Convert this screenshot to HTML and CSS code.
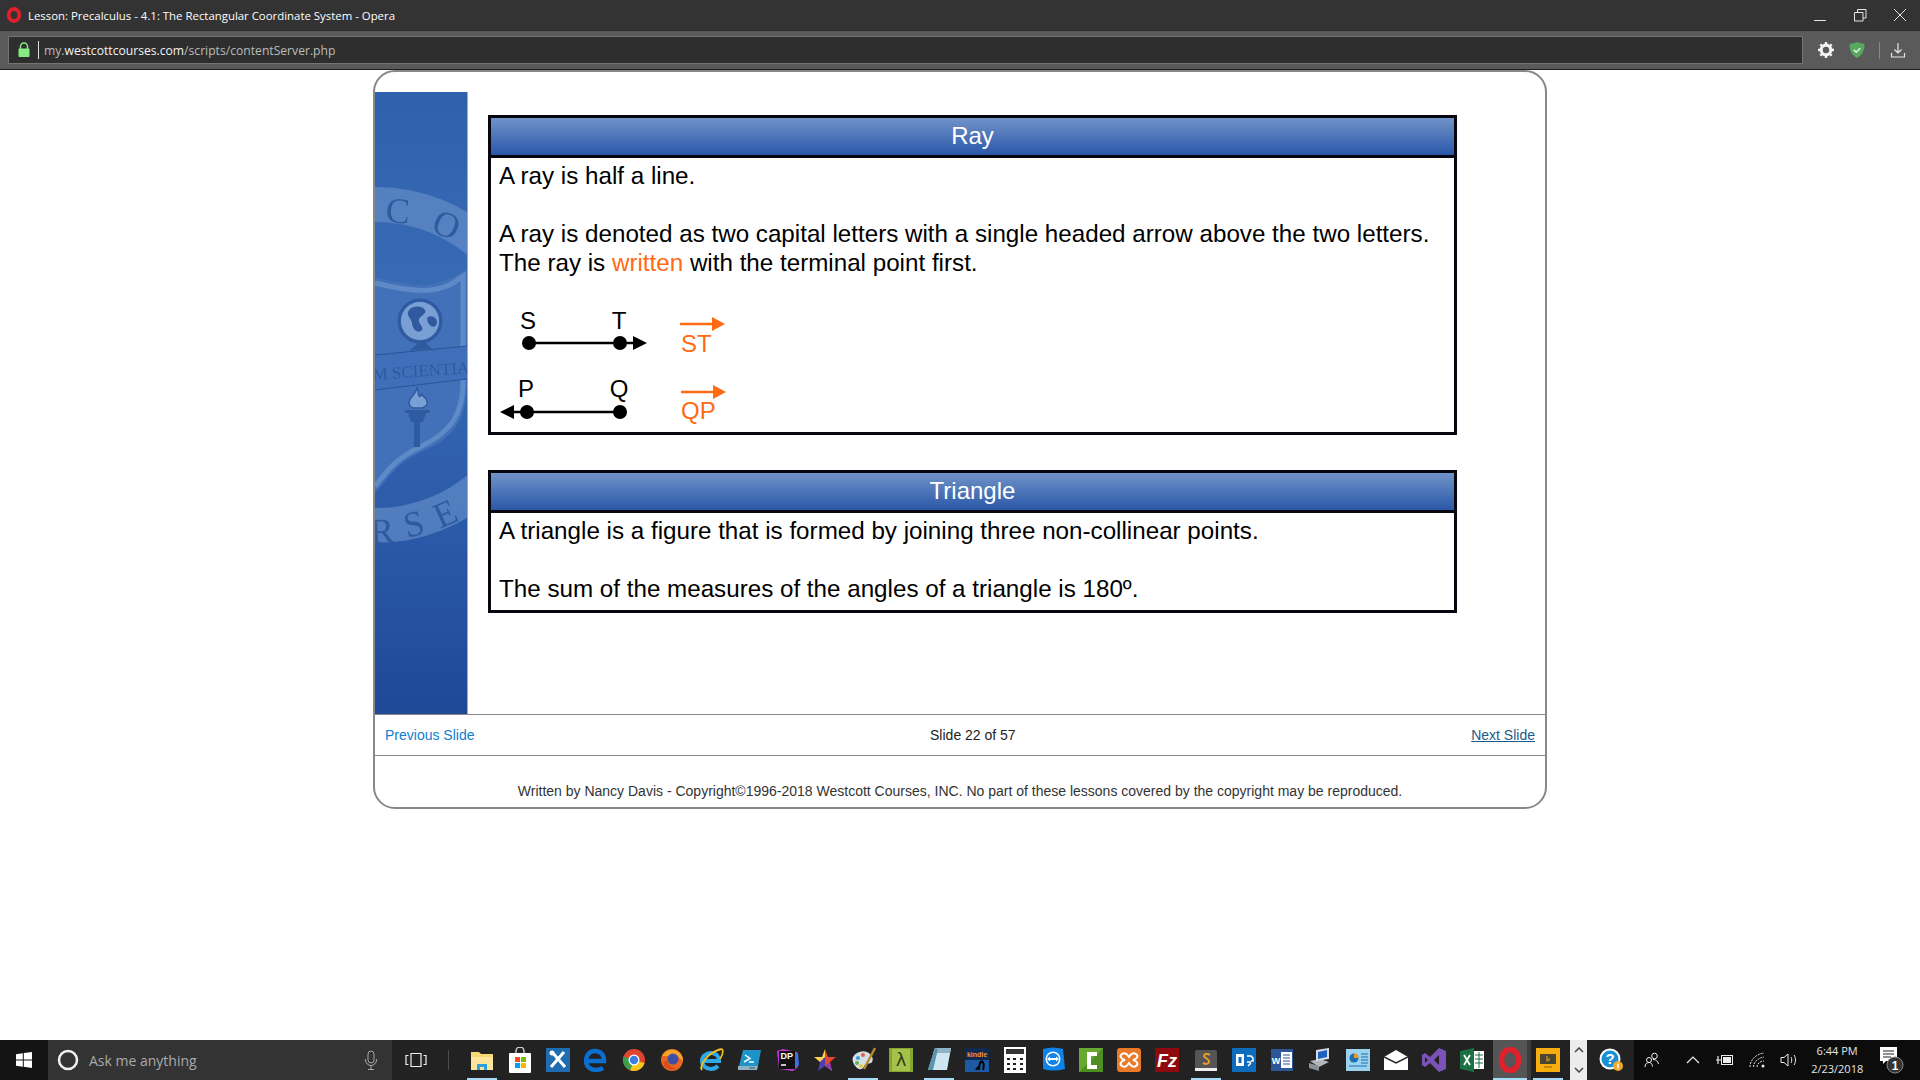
FILE: index.html
```html
<!DOCTYPE html>
<html lang="en">
<head>
    <meta charset="UTF-8">
    <meta name="viewport" content="width=device-width, initial-scale=1.0">
    <title>Lesson: Precalculus - 4.1: The Rectangular Coordinate System - Opera</title>
    <link rel="stylesheet" href="styles.css">
</head>
<body>
    <div class="title-bar">
        <svg class="opera-mark" width="16" height="16" viewBox="0 0 16 16"><ellipse cx="8" cy="8" rx="5.300" ry="6" fill="none" stroke="#e0202c" stroke-width="3.800"/></svg>
        <span class="title-text">Lesson: Precalculus - 4.1: The Rectangular Coordinate System - Opera</span>
        <div class="window-controls">
            <svg width="40" height="30" viewBox="0 0 40 30"><path d="M14 20.500h12" stroke="#e6e6e6"/></svg>
            <svg width="40" height="30" viewBox="0 0 40 30"><path d="M14.500 12.500h8.500v8.500h-8.500zM17.500 12v-2.500h8.500v8.500h-3" fill="none" stroke="#e6e6e6"/></svg>
            <svg width="40" height="30" viewBox="0 0 40 30"><path d="M14 9l12 12M26 9l-12 12" stroke="#e6e6e6"/></svg>
        </div>
    </div>

    <div class="address-bar">
        <div class="url-field">
            <svg class="lock" width="14" height="16" viewBox="0 0 14 16"><path d="M3.500 7V4.500a3.500 3.500 0 0 1 7 0V7" fill="none" stroke="#85ec85" stroke-width="1.500"/><rect x="1.500" y="6.500" width="11" height="8.500" rx="1" fill="#85ec85"/></svg>
            <span class="url-text">my.<b>westcottcourses.com</b>/scripts/contentServer.php</span>
        </div>
        <div class="browser-tools">
            <svg width="18" height="18" viewBox="0 0 18 18"><circle cx="9" cy="9" r="4.800" fill="none" stroke="#f2f2f2" stroke-width="3.200"/><path d="M9 1v3M9 14v3M1 9h3M14 9h3M3.300 3.300l2.200 2.200M12.500 12.500l2.200 2.200M14.700 3.300l-2.200 2.200M5.500 12.500l-2.200 2.200" stroke="#f2f2f2" stroke-width="2.400"/></svg>
            <svg width="18" height="18" viewBox="0 0 18 18"><path d="M9 1c3 1.200 5 1.700 7.500 1.800C16.700 9.500 14 14.500 9 17 4 14.500 1.300 9.500 1.500 2.800 4 2.700 6 2.200 9 1z" fill="#58a860"/><path d="M5.800 8.800l2.400 2.400 4-4" fill="none" stroke="#e8f4e8" stroke-width="1.600"/></svg>
            <span class="tool-divider"></span>
            <svg width="18" height="18" viewBox="0 0 18 18"><path d="M9 2v10M5.500 8.500L9 12l3.500-3.500M2.500 12v4h13v-4" fill="none" stroke="#e6e6e6" stroke-width="1.200"/></svg>
        </div>
    </div>

    <div class="page">
        <div class="lesson-card">
            <div class="lesson-top">
                <div class="sidebar">
                    <svg width="92" height="622" viewBox="0 0 92 622">
                        <defs>
                            <linearGradient id="sideBg" x1="0" y1="0" x2="0" y2="1">
                                <stop offset="0" stop-color="#2f60ac"/>
                                <stop offset="0.35" stop-color="#3a6cb6"/>
                                <stop offset="0.7" stop-color="#2b5aa8"/>
                                <stop offset="1" stop-color="#1f4897"/>
                            </linearGradient>
                        </defs>
                        <rect width="92" height="622" fill="url(#sideBg)"/>
                        <g class="crest">
                            <circle cx="1" cy="273" r="160.500" fill="none" stroke="#6a92cc" stroke-opacity="0.6" stroke-width="35"/>
                            <path d="M0 185C20 190 45 196 62 191S84 181 92 178V290C92 325 80 345 50 358S15 385 0 401Z" fill="#4271ba"/>
                            <path d="M0 191C20 196 45 201 62 197S80 189 88 184V290C88 322 76 340 47 354S12 380 0 394" fill="none" stroke="#5f8ac8" stroke-width="5"/>
                            <path d="M0 263L92 254V287L0 298Z" fill="#3f6fb8"/>
                            <path d="M0 263L92 254M0 298L92 287" stroke="#2a5497" stroke-width="1.200"/>
                            <g fill="#2f5a9f">
                                <text class="crest-letter" transform="translate(10 130) rotate(4)">C</text>
                                <text class="crest-letter" transform="translate(55 139) rotate(22)">O</text>
                                <text class="crest-letter" transform="translate(-4 452) rotate(-4)">R</text>
                                <text class="crest-letter" transform="translate(32 446) rotate(-14)">S</text>
                                <text class="crest-letter" transform="translate(65 437) rotate(-24)">E</text>
                                <text class="crest-motto" transform="translate(-2 288) rotate(-4)">M SCIENTIAE</text>
                            </g>
                            <circle cx="45" cy="229" r="19" fill="#7a9fd4"/>
                            <circle cx="45" cy="229" r="21" fill="none" stroke="#2f5a9f" stroke-width="3"/>
                            <path d="M34 218c5-5 14-4 16 0s-4 5-6 9 7 9 2 12-9-4-9-8-7-8-3-13zM53 225c4-2 9 1 9 5s-3 6-6 4-5-7-3-9z" fill="#2f5a9f"/>
                            <path d="M33 260c8-3 18-3 26-1l-8-8h-8z" fill="#2f5a9f"/>
                            <path d="M42 295c1 5-8 10-8 16 0 3 2 4 4 5h9c3-1 6-3 5-7-1-5-4-3-5-7-1 2-2 3-3 2s0-5-2-9z" fill="#7a9fd4" stroke="#2f5a9f" stroke-width="1.500"/>
                            <path d="M30 318h25l-1 3h-3l-3 9h-3v25h-6v-25h-3l-3-9h-3z" fill="#2f5a9f"/>
                        </g>
                    </svg>
                </div>
                <div class="lesson-content">
                    <div class="topic-box">
                        <div class="topic-header">Ray</div>
                        <div class="topic-body">
                            <p>A ray is half a line.</p>
                            <p class="blank"></p>
                            <p>A ray is denoted as two capital letters with a single headed arrow above the two letters.</p>
                            <p>The ray is <span class="accent">written</span> with the terminal point first.</p>
                            <svg class="ray-diagram" width="260" height="155" viewBox="0 -1 260 155">
                                <g stroke="#000" stroke-width="2.500">
                                    <path d="M38 65h106M23 134h106"/>
                                </g>
                                <g fill="#000">
                                    <circle cx="38" cy="65" r="7"/>
                                    <circle cx="129" cy="65" r="7"/>
                                    <path d="M142 58l14 7-14 7z"/>
                                    <circle cx="36" cy="134" r="7"/>
                                    <circle cx="129" cy="134" r="7"/>
                                    <path d="M23 127l-14 7 14 7z"/>
                                </g>
                                <g class="diagram-label">
                                    <text x="37" y="51" text-anchor="middle">S</text>
                                    <text x="128" y="51" text-anchor="middle">T</text>
                                    <text x="35" y="119" text-anchor="middle">P</text>
                                    <text x="128" y="119" text-anchor="middle">Q</text>
                                </g>
                                <g stroke="#ff6a13" stroke-width="2.500"><path d="M189 46h36M190 114h36"/></g>
                                <g fill="#ff6a13"><path d="M221 39l13 7-13 7zM222 107l13 7-13 7z"/></g>
                                <g class="diagram-label diagram-accent">
                                    <text x="190" y="74">ST</text>
                                    <text x="190" y="141">QP</text>
                                </g>
                            </svg>
                        </div>
                    </div>
                    <div class="topic-box">
                        <div class="topic-header">Triangle</div>
                        <div class="topic-body">
                            <p>A triangle is a figure that is formed by joining three non-collinear points.</p>
                            <p class="blank"></p>
                            <p>The sum of the measures of the angles of a triangle is 180º.</p>
                        </div>
                    </div>
                </div>
            </div>
            <div class="slide-nav">
                <a class="prev-link" href="#">Previous Slide</a>
                <span>Slide 22 of 57</span>
                <a class="next-link" href="#">Next Slide</a>
            </div>
            <div class="copyright">Written by Nancy Davis - Copyright©1996-2018 Westcott Courses, INC. No part of these lessons covered by the copyright may be reproduced.</div>
        </div>
    </div>

    <div class="taskbar">
        <div class="start-btn">
            <svg width="16" height="16" viewBox="0 0 16 16"><path d="M0 2.200l6.800-1V7.500H0zM7.800 1l8.200-1V7.500H7.800zM0 8.500h6.800v6.300L0 13.800zM7.800 8.500H16V16l-8.200-1.200z" fill="#fff"/></svg>
        </div>
        <div class="search-box">
            <svg width="22" height="22" viewBox="0 0 22 22"><circle cx="11" cy="11" r="9" fill="none" stroke="#f0f0f0" stroke-width="2.500"/></svg>
            <span class="search-text">Ask me anything</span>
            <svg class="mic" width="14" height="20" viewBox="0 0 14 20"><rect x="4" y="1" width="6" height="12" rx="3" fill="none" stroke="#a8a8a8"/><path d="M1.500 9v1a5.500 5.500 0 0 0 11 0V9M7 16v3M4 19.500h6" fill="none" stroke="#a8a8a8"/></svg>
        </div>
        <div class="task-view">
            <svg width="22" height="16" viewBox="0 0 22 16"><path d="M6 1.500h10v13H6zM3.500 3.500H1v9h2.500M18.500 3.500H21v9h-2.500" fill="none" stroke="#f0f0f0" stroke-width="1.200"/></svg>
        </div>
        <span class="task-divider"></span>
        <div class="app-list">
            <div class="app on"><svg width="24" height="24" viewBox="0 0 24 24"><path d="M1 4h8l2 2h12v16H1z" fill="#f7d674"/><path d="M1 9h22v13H1z" fill="#fbe59c"/><path d="M7 22v-6h10v6h-3v-3h-4v3z" fill="#2f9fe0"/></svg></div>
            <div class="app"><svg width="24" height="26" viewBox="0 0 24 26"><path d="M8 7V4a4 4 0 0 1 8 0v3" fill="none" stroke="#ddd" stroke-width="1.300"/><rect x="1" y="6" width="22" height="20" rx="1" fill="#fff"/><rect x="7" y="10" width="5" height="5" fill="#f25022"/><rect x="13" y="10" width="5" height="5" fill="#7fba00"/><rect x="7" y="16" width="5" height="5" fill="#00a4ef"/><rect x="13" y="16" width="5" height="5" fill="#ffb900"/></svg></div>
            <div class="app"><svg width="24" height="24" viewBox="0 0 24 24"><rect width="24" height="24" fill="#1f6db0"/><path d="M6 4l13 15M18 4L5 19" stroke="#fff" stroke-width="3"/><circle cx="6" cy="5" r="2.500" fill="#fff"/></svg></div>
            <div class="app"><svg width="24" height="24" viewBox="0 0 24 24"><path d="M3 13h17c0-6-3-10-9-10S2 8 2 13c0 6 5 9 10 9 3 0 5-.8 7-2" fill="none" stroke="#0a6fd0" stroke-width="4.500"/></svg></div>
            <div class="app"><svg width="24" height="24" viewBox="0 0 24 24"><circle cx="12" cy="12" r="11" fill="#e0432f"/><path d="M12 12L22.500 15A11 11 0 0 1 8 22.300z" fill="#f7c61a"/><path d="M12 12L8 22.300A11 11 0 0 1 1.500 8.500z" fill="#3ca04a"/><circle cx="12" cy="12" r="5.500" fill="#fff"/><circle cx="12" cy="12" r="4.200" fill="#3b7de0"/></svg></div>
            <div class="app"><svg width="24" height="24" viewBox="0 0 24 24"><circle cx="12" cy="12" r="11" fill="#e8671f"/><path d="M2 8c3-6 9-7 13-6 6 2 8 7 8 11l-6-5z" fill="#f4a42b"/><circle cx="13" cy="11" r="5.500" fill="#3f4fa8"/><path d="M3 15c2 6 9 8 14 5-5 0-9-2-10-8z" fill="#d94a1c"/></svg></div>
            <div class="app"><svg width="26" height="26" viewBox="0 0 26 26"><path d="M5 14h16c0-5-3-8-8-8s-9 3.500-9 8 4 8 9 8c3 0 5-1 7-3" fill="none" stroke="#2da9e8" stroke-width="4"/><path d="M4 23C1 20 8 6 24 2c-6 0-19 8-21 19zM24 2c2 3 0 7-2 10" fill="none" stroke="#f0c020" stroke-width="1.700"/></svg></div>
            <div class="app"><svg width="24" height="24" viewBox="0 0 24 24"><path d="M6 2h18l-3 16H2z" fill="#1e93c8"/><path d="M1 18h20l-1 4H1z" fill="#8fb2c4"/><path d="M8 7l5 3.500L7 14M12 14h5" fill="none" stroke="#fff" stroke-width="1.500"/><path d="M12 20h6" stroke="#456"/></svg></div>
            <div class="app"><svg width="24" height="24" viewBox="0 0 24 24"><path d="M2 3l6-2 14 3 1 15-5 4-14-2z" fill="#c236d6"/><path d="M16 3l7 2 1 12-5 4z" fill="#3f6fe0"/><rect x="4" y="3" width="16" height="18" fill="#111"/><text class="tiny-bold" x="5.500" y="11" fill="#fff">DP</text><path d="M6 17h5" stroke="#fff" stroke-width="1.500"/></svg></div>
            <div class="app"><svg width="24" height="24" viewBox="0 0 24 24"><path d="M12 1l3 8h8l-6 5 2 9-7-5z" fill="#e8452f"/><path d="M12 1L9 9H1l6 5 5 4z" fill="#f8d04a"/><path d="M12 18l-7 5 2-9 5-5z" fill="#4d3fb0"/><path d="M12 18l7 5-2-9z" fill="#8a3fb0"/></svg></div>
            <div class="app on"><svg width="26" height="26" viewBox="0 0 26 26"><path d="M3 10c3-5 9-7 14-5s7 7 5 10-5 0-7 3-3 5-6 4-8-7-6-12z" fill="#d4dfe6"/><circle cx="8" cy="11" r="2" fill="#3a9ad9"/><circle cx="13" cy="8" r="2" fill="#e85a4f"/><circle cx="7" cy="16" r="2" fill="#5fb54a"/><circle cx="11" cy="19" r="1.800" fill="#f0c020"/><path d="M25 1L14 22" stroke="#b8862d" stroke-width="2.400"/></svg></div>
            <div class="app"><svg width="24" height="24" viewBox="0 0 24 24"><rect width="24" height="24" fill="#83a62d"/><rect x="3" y="1" width="18" height="22" fill="#a5c24a"/><text class="lambda" x="12" y="18" text-anchor="middle" fill="#30401a">λ</text></svg></div>
            <div class="app on"><svg width="26" height="26" viewBox="0 0 26 26"><path d="M9 1h16l-4 22H2z" fill="#cfe6f2"/><path d="M9 1h16l-1 5H7z" fill="#8fb4c8"/><path d="M2 23l7-22 3 1-5 21z" fill="#5a93ad"/></svg></div>
            <div class="app"><svg width="24" height="24" viewBox="0 0 24 24"><rect width="24" height="24" rx="1" fill="#10294f"/><rect y="12" width="24" height="12" fill="#1d5aa6"/><text class="tiny-kindle" x="12" y="9" text-anchor="middle" fill="#f09a2a">kindle</text><path d="M14 22c0-5 1-8 3-9M17 13c2 2 2 6 1 9M11 22c1-2 2-3 3-3" fill="none" stroke="#000" stroke-width="2"/></svg></div>
            <div class="app"><svg width="22" height="26" viewBox="0 0 22 26"><rect width="22" height="26" fill="#fff"/><rect x="2" y="2" width="18" height="5" fill="#333"/><path d="M3 11h3v2H3zM9 11h3v2H9zM16 11h3v2h-3zM3 16h3v2H3zM9 16h3v2H9zM16 16h3v2h-3zM3 21h3v2H3zM9 21h3v2H9zM16 21h3v2h-3z" fill="#222"/></svg></div>
            <div class="app"><svg width="24" height="26" viewBox="0 0 24 26"><path d="M2 2q10-3 20 0l2 20q-12 3-22 0z" fill="#0f83e8"/><circle cx="12" cy="12" r="7.500" fill="#fff"/><circle cx="12" cy="12" r="6" fill="#0f83e8"/><path d="M6 12l3-2.500v1.500h6V9.500l3 2.500-3 2.500V13H9v1.500z" fill="#fff"/></svg></div>
            <div class="app"><svg width="24" height="24" viewBox="0 0 24 24"><rect width="24" height="24" fill="#4f8f22"/><path d="M0 0h24L0 24z" fill="#69a82e"/><path d="M18 6h-8v13h8" fill="none" stroke="#fff" stroke-width="4"/></svg></div>
            <div class="app"><svg width="24" height="24" viewBox="0 0 24 24"><rect width="24" height="24" rx="3" fill="#ea7a28"/><path d="M5 6c3-2 5 0 7 3 2-3 4-5 7-3s1 5-3 6c4 1 6 4 3 6s-5 0-7-3c-2 3-4 5-7 3s-1-5 3-6C4 11 2 8 5 6z" fill="none" stroke="#fff" stroke-width="2"/></svg></div>
            <div class="app"><svg width="24" height="24" viewBox="0 0 24 24"><rect width="24" height="24" fill="#8f0a0f"/><text class="fz-text" x="12" y="19" text-anchor="middle" fill="#fff">Fz</text></svg></div>
            <div class="app on"><svg width="24" height="24" viewBox="0 0 24 24"><rect x="1" y="2" width="22" height="20" rx="2" fill="#555"/><rect x="1" y="20" width="22" height="3" fill="#eee"/><path d="M16 7c-3-2-6-1-6 1s6 3 5 6-4 2-6 1" fill="none" stroke="#f09a2a" stroke-width="2"/></svg></div>
            <div class="app"><svg width="24" height="24" viewBox="0 0 24 24"><rect width="24" height="24" fill="#0f6cbd"/><rect x="4" y="6" width="8" height="12" fill="#fff"/><rect x="6.500" y="9" width="3" height="6" fill="#0f6cbd"/><path d="M15 8h4l2 2v3h-2M19 15l-3 3M15 14h4" fill="none" stroke="#fff" stroke-width="1.500"/></svg></div>
            <div class="app"><svg width="24" height="24" viewBox="0 0 24 24"><rect x="1" y="1" width="22" height="22" fill="#2b579a"/><rect x="11" y="4" width="11" height="16" fill="#fff"/><path d="M13 7h7M13 10h7M13 13h7M13 16h7" stroke="#2b579a"/><text class="tiny-bold" x="6" y="16" text-anchor="middle" fill="#fff">W</text></svg></div>
            <div class="app"><svg width="26" height="26" viewBox="0 0 26 26"><path d="M3 14l10-2 9 3-10 5z" fill="#b0b6ba"/><path d="M9 3l13-2v11L9 14z" fill="#d7dde2"/><path d="M11 5l9-2v7l-9 2z" fill="#1f5fc0"/><path d="M2 16l10 3v5L2 21z" fill="#8b9297"/></svg></div>
            <div class="app"><svg width="24" height="22" viewBox="0 0 24 22"><rect width="24" height="22" fill="#9bd3ef"/><circle cx="8" cy="9" r="4.500" fill="#1f6fb5"/><path d="M8 9V4.500A4.500 4.500 0 0 1 12.500 9z" fill="#f29a1f"/><path d="M15 5h7M15 8h7M15 11h7M15 14h7M3 17h18" stroke="#1f6fb5" stroke-width="1.200"/></svg></div>
            <div class="app"><svg width="24" height="20" viewBox="0 0 24 20"><path d="M0 7L12 0l12 7v13H0z" fill="#fff"/><path d="M0 7l12 6 12-6" fill="none" stroke="#222" stroke-width="1.500"/></svg></div>
            <div class="app"><svg width="24" height="26" viewBox="0 0 24 26"><path d="M17 1l7 3v18l-7 3-9-9-5 4-3-2V8l3-2 5 4zM17 8l-5 5 5 5zM3 10v6l3-3z" fill="#7b52b8" fill-rule="evenodd"/></svg></div>
            <div class="app"><svg width="24" height="24" viewBox="0 0 24 24"><path d="M0 3l14-3v24L0 21z" fill="#1d7145"/><rect x="14" y="3" width="10" height="18" fill="#fff"/><path d="M15 7h8M15 11h8M15 15h8M19 4v16" stroke="#1d7145"/><path d="M4 7l6 10M10 7l-6 10" stroke="#fff" stroke-width="1.800"/></svg></div>
            <div class="app active"><svg width="24" height="26" viewBox="0 0 24 26"><ellipse cx="12" cy="13" rx="8.500" ry="10.500" fill="none" stroke="#e0202c" stroke-width="5.500"/></svg></div>
            <div class="app on"><svg width="24" height="24" viewBox="0 0 24 24"><rect width="24" height="24" fill="#f8ad0f"/><rect x="4" y="6" width="16" height="10" fill="#4a4634"/><path d="M8 19h8" stroke="#b07d0a" stroke-width="1.500"/><path d="M11 8v5l3-1.500-1.500-1" fill="none" stroke="#f8ad0f"/></svg></div>
        </div>
        <div class="scroll-arrows">
            <svg width="10" height="6" viewBox="0 0 10 6"><path d="M1 5l4-4 4 4" fill="none" stroke="#444" stroke-width="1.500"/></svg>
            <svg width="10" height="6" viewBox="0 0 10 6"><path d="M1 1l4 4 4-4" fill="none" stroke="#444" stroke-width="1.500"/></svg>
        </div>
        <div class="help-slot">
            <svg width="24" height="24" viewBox="0 0 24 24"><circle cx="11" cy="11" r="10.500" fill="#fff"/><circle cx="11" cy="11" r="8.500" fill="#1a8fd6"/><text class="help-mark" x="11" y="16" text-anchor="middle" fill="#fff">?</text><circle cx="19" cy="18" r="5" fill="#f0a92a"/><path d="M19 15.500v5" stroke="#fff" stroke-width="1.500"/></svg>
        </div>
        <div class="tray">
            <div class="tray-slot people-slot"><svg width="16" height="16" viewBox="0 0 16 16"><circle cx="10.500" cy="4" r="2.800" fill="none" stroke="#eee"/><circle cx="5" cy="8" r="2.500" fill="none" stroke="#eee"/><path d="M1 15c0-3 2-4.500 4-4.500s3 1 3.500 4M9 7.500c3 0 5 1.500 5.500 4.500" fill="none" stroke="#eee"/></svg></div>
            <div class="tray-slot"><svg width="14" height="8" viewBox="0 0 14 8"><path d="M1 7l6-6 6 6" fill="none" stroke="#eee" stroke-width="1.200"/></svg></div>
            <div class="tray-slot"><svg width="18" height="12" viewBox="0 0 18 12"><rect x="5.500" y="1.500" width="11" height="9" fill="none" stroke="#eee"/><rect x="7" y="3" width="8" height="6" fill="#eee"/><path d="M0 6h5M2 2v8" stroke="#eee" stroke-width="1.200"/></svg></div>
            <div class="tray-slot"><svg width="16" height="16" viewBox="0 0 16 16"><path d="M1 15C1 8 7 2 15 1M4.500 15c0-5 4.500-9 10.500-10M8 15c0-3 3-6 7-6" fill="none" stroke="#ddd" stroke-dasharray="2 1"/><circle cx="14" cy="14" r="1.500" fill="#eee"/></svg></div>
            <div class="tray-slot"><svg width="18" height="16" viewBox="0 0 18 16"><path d="M1 5.500h3L8 2v12L4 10.500H1z" fill="none" stroke="#eee"/><path d="M11 5c1 2 1 4 0 6M14 3c2 3 2 7 0 10" fill="none" stroke="#eee"/></svg></div>
            <div class="clock">
                <span>6:44 PM</span>
                <span>2/23/2018</span>
            </div>
            <div class="tray-slot notify">
                <svg width="26" height="30" viewBox="0 0 26 30"><path d="M1 2h17v14H7l-3 3v-3H1z" fill="#fff"/><path d="M4 6h11M4 9h11M4 12h8" stroke="#222"/><circle cx="16" cy="20" r="8" fill="#333" stroke="#888"/><text class="notify-count" x="16" y="25" text-anchor="middle" fill="#fff">1</text></svg>
            </div>
        </div>
    </div>
</body>
</html>
```

FILE: styles.css
```css
* {
    box-sizing: border-box;
}
body {
    margin: 0;
    height: 1080px;
    overflow: hidden;
    display: flex;
    flex-direction: column;
    background-color: #fff;
    font-family: "Liberation Sans", Arial, sans-serif;
}
p {
    margin: 0;
}
svg {
    display: block;
    flex-shrink: 0;
}

/* browser chrome */
.title-bar {
    height: 31px;
    display: flex;
    align-items: center;
    padding-left: 6px;
    background-color: #333;
    border-bottom: 1px solid #2a2a2a;
}
.title-text {
    margin-left: 6px;
    color: #fff;
    font-family: "Open Sans", sans-serif;
    font-size: 11.400px;
}
.window-controls {
    display: flex;
    margin-left: auto;
}
.address-bar {
    height: 39px;
    display: flex;
    align-items: center;
    padding-left: 8px;
    background-color: #5a5a5a;
    border-bottom: 1px solid #1e1e1e;
}
.url-field {
    width: 1795px;
    height: 28px;
    display: flex;
    align-items: center;
    padding-left: 8px;
    background-color: #2d2e2d;
    border: 1px solid #747474;
}
.lock {
    margin-right: 7px;
}
.url-text {
    padding: 2px 0 0 5px;
    border-left: 1px solid #ddd;
    color: #bbb;
    font-family: "Open Sans", sans-serif;
    font-size: 12.150px;
    line-height: 16px;
}
.url-text b {
    color: #f2f2f2;
    font-weight: 400;
}
.browser-tools {
    flex: 1;
    display: flex;
    align-items: center;
    gap: 13px;
    padding-left: 14px;
}
.tool-divider {
    width: 1px;
    height: 17px;
    margin-right: -4px;
    background-color: #888;
}

/* lesson card */
.page {
    flex: 1;
    display: flex;
    justify-content: center;
    align-items: flex-start;
}
.lesson-card {
    width: 1174px;
    height: 739px;
    background-color: #fff;
    border: 2px solid #888;
    border-radius: 22px;
}
.lesson-top {
    display: flex;
    height: 642px;
    padding-top: 20px;
}
.sidebar {
    width: 93px;
    border-right: 1px solid #94aedb;
}
.crest {
    filter: blur(0.5px);
}
.lesson-content {
    margin-left: 20px;
    padding-top: 23px;
}
.topic-box {
    width: 969px;
    margin-bottom: 35px;
    border: 3px solid #05060f;
}
.topic-header {
    height: 40px;
    background: linear-gradient(#7093c8, #2a57a8);
    border-bottom: 3px solid #05060f;
    color: #fff;
    font-size: 24px;
    line-height: 36px;
    text-align: center;
}
.topic-body {
    padding: 3px 0 7px 8px;
    color: #000;
    font-size: 24.200px;
    line-height: 29px;
}
.blank {
    height: 29px;
}
.accent {
    color: #ff6a13;
}
.ray-diagram {
    margin-left: -8px;
    margin-bottom: -7px;
}
.diagram-label {
    font-size: 24px;
    fill: #000;
}
.diagram-accent {
    fill: #ff6a13;
}

/* crest lettering */
.crest-letter {
    font-family: "Liberation Serif", serif;
    font-size: 36px;
}
.crest-motto {
    font-family: "Liberation Serif", serif;
    font-size: 17px;
}

/* slide footer */
.slide-nav {
    height: 42px;
    display: flex;
    justify-content: space-between;
    align-items: center;
    padding: 0 10px;
    border-top: 1px solid #888;
    border-bottom: 1px solid #888;
    color: #222;
    font-size: 14px;
}
.prev-link {
    color: #0f7fcf;
    text-decoration: none;
}
.next-link {
    color: #1c5a8c;
}
.copyright {
    padding-top: 26px;
    color: #333;
    font-size: 14px;
    line-height: 18px;
    text-align: center;
}

/* taskbar */
.taskbar {
    height: 40px;
    display: flex;
    align-items: center;
    background-color: #222;
}
.taskbar > * {
    flex-shrink: 0;
}
.start-btn {
    width: 48px;
    height: 100%;
    display: flex;
    align-items: center;
    justify-content: center;
    background-color: #141414;
}
.search-box {
    width: 344px;
    height: 100%;
    display: flex;
    align-items: center;
    padding-left: 9px;
    background-color: #333;
}
.search-text {
    flex: 1;
    margin-left: 10px;
    color: #aaa;
    font-family: "Open Sans", sans-serif;
    font-size: 14px;
}
.mic {
    margin-right: 14px;
}
.task-view {
    width: 48px;
    display: flex;
    justify-content: center;
}
.task-divider {
    width: 1px;
    height: 20px;
    margin: 0 14px 0 8px;
    background-color: #4a4a4a;
}
.app-list {
    display: flex;
    height: 100%;
}
.app {
    width: 38.080px;
    height: 100%;
    display: flex;
    align-items: center;
    justify-content: center;
}
.app.on {
    background: linear-gradient(#a6dcf8, #a6dcf8) no-repeat center bottom / 30px 2px;
}
.app.active {
    width: 34px;
    margin: 0 2px;
    background: linear-gradient(#a6dcf8, #a6dcf8) no-repeat center bottom / 100% 2px, #555;
    box-shadow: 4px 0 0 #3c3c3c;
}
.tiny-bold {
    font-family: "Liberation Sans", sans-serif;
    font-size: 9px;
    font-weight: 700;
}
.tiny-kindle {
    font-family: "Liberation Sans", sans-serif;
    font-size: 7px;
    font-weight: 700;
}
.lambda {
    font-family: "DejaVu Sans", sans-serif;
    font-size: 18px;
}
.fz-text {
    font-family: "Liberation Sans", sans-serif;
    font-size: 18px;
    font-style: italic;
    font-weight: 700;
}
.help-mark {
    font-family: "Liberation Sans", sans-serif;
    font-size: 15px;
    font-weight: 700;
}
.notify-count {
    font-family: "Liberation Sans", sans-serif;
    font-size: 12px;
    font-weight: 700;
}
.scroll-arrows {
    width: 17px;
    height: 100%;
    display: flex;
    flex-direction: column;
    align-items: center;
    justify-content: space-around;
    margin-left: 3px;
    background-color: #ececec;
}
.help-slot {
    width: 47px;
    display: flex;
    justify-content: center;
}
.tray {
    flex: 1;
    height: 100%;
    display: flex;
    align-items: center;
    padding-left: 2px;
    background-color: #0c0c0c;
}
.tray-slot {
    width: 32px;
    display: flex;
    justify-content: center;
}
.people-slot {
    margin-right: 9px;
}
.clock {
    width: 64px;
    display: flex;
    flex-direction: column;
    align-items: center;
    color: #e6e6e6;
    font-family: "Open Sans", sans-serif;
    font-size: 11px;
    line-height: 18px;
}
.notify {
    width: 42px;
    padding-left: 3px;
}
```
